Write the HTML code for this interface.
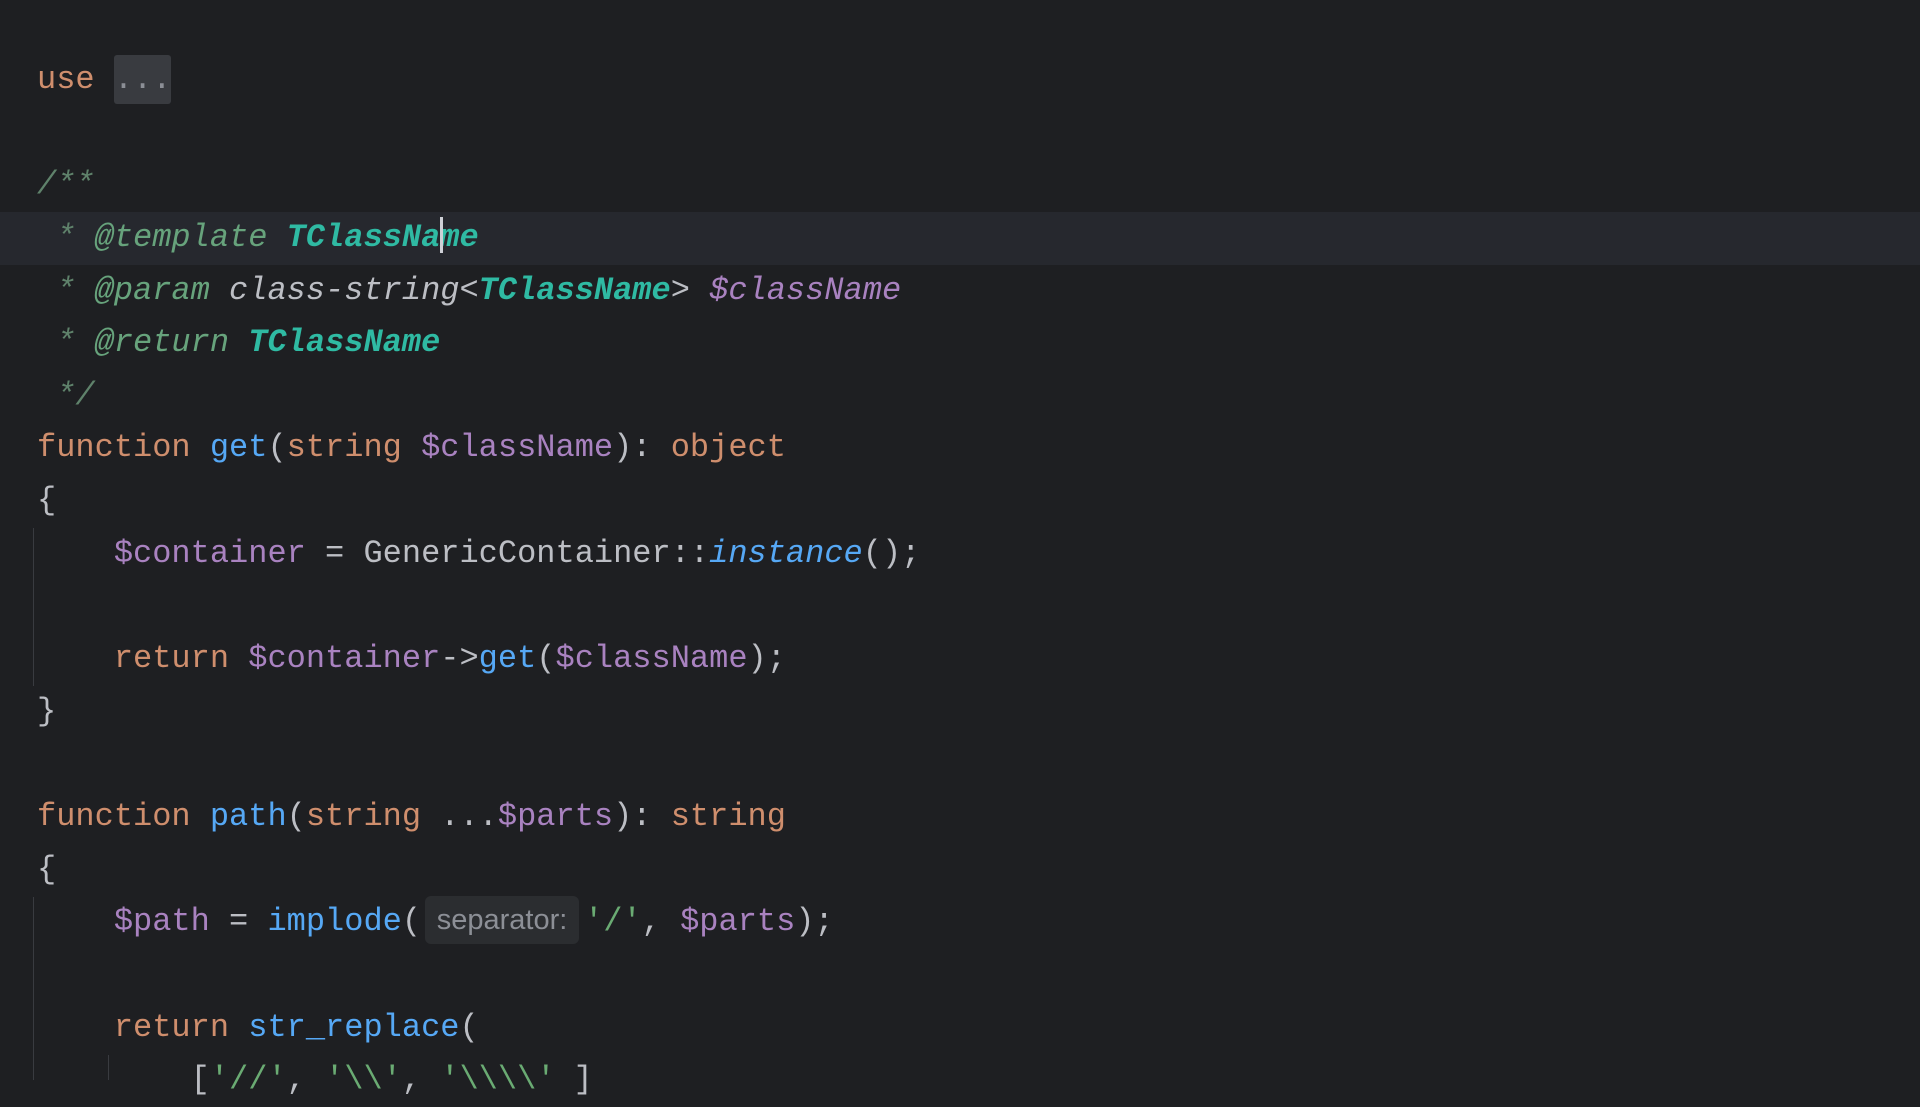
<!DOCTYPE html>
<html><head><meta charset="utf-8"><style>
html,body{margin:0;padding:0;background:#1e1f22;width:1920px;height:1080px;overflow:hidden}
.ed{position:absolute;left:0;top:54px;width:1920px;font-family:"Liberation Mono",monospace;font-size:32px;color:#bcbec4}
.l{height:52.65px;line-height:52.65px;white-space:pre;padding-left:37px;position:relative}
.hl{background:#26282e}
.k{color:#cf8e6d}.f{color:#56a8f5}.v{color:#a982c0}.s{color:#6aab73}
.c{color:#5f826b;font-style:italic}.t{color:#67a37c;font-style:italic}
.tn{color:#2fbaa3;font-style:italic;font-weight:bold}.w{color:#bcbec4;font-style:italic}
.vi{color:#a982c0;font-style:italic}.fi{color:#56a8f5;font-style:italic}
.fold{background:#393b40;color:#8c8f96;border-radius:3px;padding:6px 0}
.hint{display:inline-block;box-sizing:border-box;width:154px;text-align:center;font-family:"Liberation Sans",sans-serif;font-size:29px;color:#8c8f96;background:#2b2d30;border-radius:6px;line-height:48px;margin:0 5px 0 4px;vertical-align:middle;position:relative;top:-2px}
.caret{display:inline-block;width:3px;height:36px;background:#ced0d6;vertical-align:middle;margin:0 -3px 0 0;position:relative;top:-2px}
.g{position:absolute;width:1px;background:#393b40}
</style></head><body>
<div class="ed">
<div class="l"><span class="k">use</span> <span class="fold">...</span></div>
<div class="l"> </div>
<div class="l"><span class="c">/**</span></div>
<div class="l hl"><span class="c"> * </span><span class="t">@template</span> <span class="tn">TClassNa</span><span class="caret"></span><span class="tn">me</span></div>
<div class="l"><span class="c"> * </span><span class="t">@param</span> <span class="w">class-string&lt;</span><span class="tn">TClassName</span><span class="w">&gt;</span> <span class="vi">$className</span></div>
<div class="l"><span class="c"> * </span><span class="t">@return</span> <span class="tn">TClassName</span></div>
<div class="l"><span class="c"> */</span></div>
<div class="l"><span class="k">function</span> <span class="f">get</span>(<span class="k">string</span> <span class="v">$className</span>): <span class="k">object</span></div>
<div class="l">{</div>
<div class="l">    <span class="v">$container</span> = GenericContainer::<span class="fi">instance</span>();</div>
<div class="l"> </div>
<div class="l">    <span class="k">return</span> <span class="v">$container</span>-&gt;<span class="f">get</span>(<span class="v">$className</span>);</div>
<div class="l">}</div>
<div class="l"> </div>
<div class="l"><span class="k">function</span> <span class="f">path</span>(<span class="k">string</span> ...<span class="v">$parts</span>): <span class="k">string</span></div>
<div class="l">{</div>
<div class="l">    <span class="v">$path</span> = <span class="f">implode</span>(<span class="hint">separator:</span><span class="s">'/'</span>, <span class="v">$parts</span>);</div>
<div class="l"> </div>
<div class="l">    <span class="k">return</span> <span class="f">str_replace</span>(</div>
<div class="l">        [<span class="s">'//'</span>, <span class="s">'\\'</span>, <span class="s">'\\\\'</span><span style="margin-left:18px">]</span></div>
</div>
<div class="g" style="left:33px;top:528px;height:158px"></div>
<div class="g" style="left:33px;top:897px;height:183px"></div>
<div class="g" style="left:108px;top:1055px;height:25px"></div>
</body></html>
